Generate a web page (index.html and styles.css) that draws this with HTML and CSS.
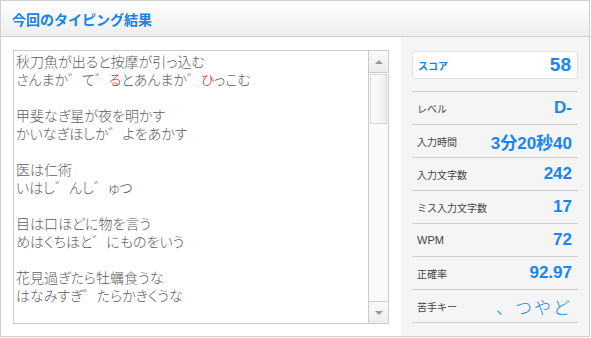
FILE: index.html
```html
<!DOCTYPE html>
<html lang="ja">
  <head>
    <meta charset="UTF-8">
    <title>今回のタイピング結果</title>
    <link rel="stylesheet" href="styles.css">
  </head>
  <body>
    <div class="result">
      <div class="result-head">今回のタイピング結果</div>
      <div class="result-body">
        <div class="text-box">
          <div class="text-lines">
            <div>秋刀魚が出ると按摩が引っ込む</div>
            <div>さんまか゛て゛<span class="miss">る</span>とあんまか゛<span class="miss">ひ</span>っこむ</div>
            <div>&nbsp;</div>
            <div>甲斐なぎ星が夜を明かす</div>
            <div>かいなぎほしか゛よをあかす</div>
            <div>&nbsp;</div>
            <div>医は仁術</div>
            <div>いはし゛んし゛ゅつ</div>
            <div>&nbsp;</div>
            <div>目は口ほどに物を言う</div>
            <div>めはくちほと゛にものをいう</div>
            <div>&nbsp;</div>
            <div>花見過ぎたら牡蠣食うな</div>
            <div>はなみすぎ゛たらかきくうな</div>
          </div>
          <div class="scroll">
            <div class="scroll-btn"><span class="arrow-up"></span></div>
            <div class="scroll-thumb"></div>
            <div class="scroll-track"></div>
            <div class="scroll-btn"><span class="arrow-down"></span></div>
          </div>
        </div>

        <div class="stats">
          <div class="score">
            <span class="score-label">スコア</span>
            <span class="score-value">58</span>
          </div>
          <div class="stat-list">
            <div class="stat"><span class="stat-label">レベル</span><span class="stat-value">D-</span></div>
            <div class="stat"><span class="stat-label">入力時間</span><span class="stat-value">3分20秒40</span></div>
            <div class="stat"><span class="stat-label">入力文字数</span><span class="stat-value">242</span></div>
            <div class="stat"><span class="stat-label">ミス入力文字数</span><span class="stat-value">17</span></div>
            <div class="stat"><span class="stat-label latin">WPM</span><span class="stat-value">72</span></div>
            <div class="stat"><span class="stat-label">正確率</span><span class="stat-value">92.97</span></div>
            <div class="stat"><span class="stat-label">苦手キー</span><span class="stat-value weak">、つやど</span></div>
          </div>
        </div>
      </div>
    </div>
  </body>
</html>
```

FILE: styles.css
```css
body {
    margin: 0;
    background: #fff;
    font-family: "Liberation Sans", Arial, "Noto Sans CJK JP", sans-serif;
}

.result {
    width: 588px;
    height: 335px;
    border: 1px solid #d0d0d0;
    display: flex;
    flex-direction: column;
}

.result-head {
    height: 36px;
    box-sizing: border-box;
    padding: 0 11px;
    display: flex;
    align-items: center;
    border-bottom: 1px solid #d0d0d0;
    background: linear-gradient(#ffffff, #eeeeee);
    color: #1a82e6;
    font-size: 14px;
    font-weight: bold;
    font-family: "Noto Sans CJK JP", sans-serif;
}

.result-body {
    flex: 1;
    display: flex;
    gap: 12px;
    padding-left: 12px;
}

.text-box {
    margin-top: 13px;
    width: 376px;
    height: 274px;
    box-sizing: border-box;
    border: 1px solid #cccccc;
    display: flex;
}

.text-lines {
    flex: 1;
    padding: 1px 2px;
    color: #5c5c5c;
    font-family: "Noto Sans CJK JP", sans-serif;
    font-size: 14px;
    font-weight: 300;
    line-height: 18px;
    font-feature-settings: "palt";
    overflow: hidden;
}

.miss {
    color: #ff0000;
}

.scroll {
    width: 19px;
    border-left: 1px solid #cccccc;
    display: flex;
    flex-direction: column;
    background: #fafafa;
}

.scroll-btn {
    height: 21px;
    display: flex;
    align-items: center;
    justify-content: center;
    background: linear-gradient(#fafafa, #ececec);
}

.scroll-btn:first-child {
    border-bottom: 1px solid #cccccc;
}

.scroll-btn:last-child {
    border-top: 1px solid #cccccc;
}

.arrow-up {
    border: 4px solid transparent;
    border-top: 0;
    border-bottom: 4px solid #999999;
}

.arrow-down {
    border: 4px solid transparent;
    border-bottom: 0;
    border-top: 4px solid #999999;
}

.scroll-thumb {
    margin: 1px 1px 0;
    height: 48px;
    border: 1px solid #d8d8d8;
    background: linear-gradient(to right, #fdfdfd, #eeeeee);
}

.scroll-track {
    flex: 1;
}

.stats {
    flex: 1;
    background: #f5f5f5;
    padding: 14px 11px 0;
}

.score {
    height: 28px;
    box-sizing: border-box;
    border: 1px solid #e2e2e2;
    border-radius: 3px;
    background: #ffffff;
    display: flex;
    align-items: center;
    justify-content: space-between;
    padding: 0 6px 0 5px;
}

.score-label {
    color: #1a82e6;
    font-size: 10px;
    font-weight: bold;
    font-family: "Noto Sans CJK JP", sans-serif;
}

.score-value {
    color: #1a85ee;
    font-size: 19px;
    font-weight: bold;
}

.stat-list {
    margin-top: 12px;
    border-top: 1px solid #cfcfcf;
}

.stat {
    height: 33px;
    box-sizing: border-box;
    border-bottom: 1px solid #cfcfcf;
    display: flex;
    align-items: center;
    justify-content: space-between;
    padding: 0 6px 0 5px;
}

.stat-label {
    color: #444444;
    font-size: 10px;
    font-family: "Noto Sans CJK JP", sans-serif;
}

.stat-label.latin {
    font-family: "Liberation Sans", Arial, sans-serif;
    font-size: 11px;
}

.stat-value {
    color: #1a85ee;
    font-size: 17px;
    font-weight: bold;
}

.stat-value.weak {
    font-weight: 300;
    font-family: "Noto Sans CJK JP", sans-serif;
    font-size: 17px;
    letter-spacing: 2px;
}
```
